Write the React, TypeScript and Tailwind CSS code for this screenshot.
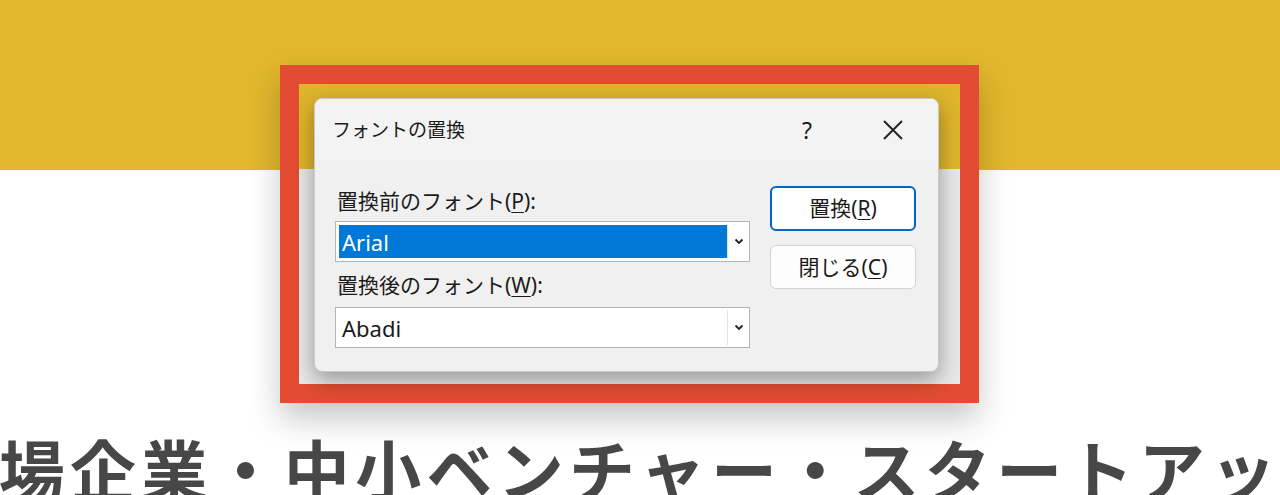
import React from "react";

const ui = "font-['Noto_Sans','Noto_Sans_CJK_JP',sans-serif]";

const Key: React.FC<{ k: string }> = ({ k }) => <span className="underline underline-offset-[3px] decoration-1">{k}</span>;

const Chevron = () => (
  <svg width="10" height="7" viewBox="0 0 10 7" fill="none">
    <path d="M1.5 1.5 L5 5 L8.5 1.5" stroke="#222" strokeWidth="1.8" />
  </svg>
);

const Combo: React.FC<{ value: string; selected?: boolean }> = ({ value, selected }) => (
  <div className="flex h-[41px] w-[415px] border border-[#b4b4b4] bg-white">
    <div className="flex-1 p-[3px] pr-0">
      <div className={`flex h-full items-center pl-[3px] text-[22px] leading-none ${selected ? "bg-[#0078d7] text-white" : "text-[#1a1a1a]"}`}>
        {value}
      </div>
    </div>
    <div className="my-[2px] w-px bg-[#e2e2e2]" />
    <div className="flex w-[21px] items-center justify-center">
      <Chevron />
    </div>
  </div>
);

const Dialog = () => (
  <div className={`flex h-[274px] w-[625px] flex-col overflow-hidden rounded-[8px] border border-[#c9c9c9] bg-[#f0f0f0] shadow-[0_8px_22px_rgba(0,0,0,0.35)] ${ui}`}>
    <div className="flex h-[62px] items-center bg-[#f3f3f3] pl-[17px] pr-[34px] text-[#1b1b1b]">
      <span className="text-[19px]">フォントの置換</span>
      <span className="ml-auto mr-[70px] text-[23px] leading-none">?</span>
      <svg width="22" height="22" viewBox="0 0 22 22">
        <path d="M2 2 L20 20 M20 2 L2 20" stroke="#222" strokeWidth="2" />
      </svg>
    </div>
    <div className="flex pt-[25px] pl-[20px] text-[#1b1b1b]">
      <div className="flex flex-col">
        <div className="flex h-[30px] items-center pl-[2px] text-[21px] leading-none">
          置換前のフォント(<Key k="P" />):
        </div>
        <div className="mt-[5px]">
          <Combo value="Arial" selected />
        </div>
        <div className="mt-[5px] flex h-[36px] items-center pl-[2px] text-[21px] leading-none">
          置換後のフォント(<Key k="W" />):
        </div>
        <div className="mt-[4px]">
          <Combo value="Abadi" />
        </div>
      </div>
      <div className="ml-[20px] flex flex-col gap-[14px]">
        <button className="flex h-[45px] w-[146px] items-center justify-center rounded-[6px] border-2 border-[#0067c0] bg-white text-[21px] leading-none">
          置換(<Key k="R" />)
        </button>
        <button className="flex h-[44px] w-[146px] items-center justify-center rounded-[6px] border border-[#d2d2d2] bg-[#fdfdfd] text-[21px] leading-none">
          閉じる(<Key k="C" />)
        </button>
      </div>
    </div>
  </div>
);

export default function App() {
  return (
    <div className="h-[495px] w-[1280px] overflow-hidden bg-[linear-gradient(to_bottom,#e0b72d_170px,#ffffff_170px)] pt-[65px]">
      <div className="ml-[280px] w-[699px] border-[19px] border-[#e34c33] shadow-[0_16px_30px_rgba(0,0,0,0.22)]">
        <div className="bg-[linear-gradient(to_bottom,#dfb52c_85px,#e8e8e8_85px)] pb-[12px] pl-[15px] pt-[14px]">
          <Dialog />
        </div>
      </div>
      <div className="mt-[31px] flex justify-center">
        <h1 className="shrink-0 whitespace-nowrap font-['Noto_Sans_CJK_JP',sans-serif] text-[66px] font-bold leading-none tracking-[5.3px] text-[#474747]">
          上場企業・中小ベンチャー・スタートアップ
        </h1>
      </div>
    </div>
  );
}
